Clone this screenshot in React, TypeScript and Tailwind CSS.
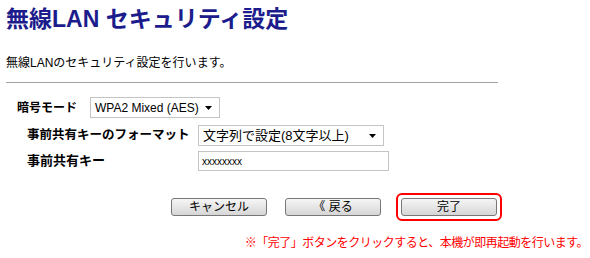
import type { ReactNode } from 'react';

// Wireless LAN security settings page (static mock of a router config screen).

const font = { fontFamily: '"Liberation Sans", "Noto Sans CJK JP", sans-serif' };

const Arrow = () => (
  <svg width="7" height="4" viewBox="0 0 7 4" className="shrink-0">
    <path d="M0 0h7L3.5 4z" fill="#000" />
  </svg>
);

const FakeSelect = ({ value, width, size }: { value: string; width: string; size: string }) => (
  <div className={`flex h-full items-center justify-between border border-[#c4c4c4] bg-white pl-[4px] pr-[7px] text-black ${size} ${width}`}>
    <span className="whitespace-nowrap">{value}</span>
    <Arrow />
  </div>
);

const Btn = ({ children }: { children: ReactNode }) => (
  <button className="flex h-[18px] w-[96px] items-center justify-center rounded-[3px] border border-[#777] bg-gradient-to-b from-[#f6f6f6] to-[#d6d6d6] text-[12px] leading-none text-black">
    {children}
  </button>
);

export default function App() {
  return (
    <div className="h-[258px] w-[590px] bg-white pl-[6px]" style={font}>
      <div className="flex h-[38px] items-center">
        <h1 className="text-[23px] font-bold leading-none text-[#1c1c8c]">無線LAN セキュリティ設定</h1>
      </div>
      <p className="mt-[13px] h-[24px] text-[12px] leading-[24px] text-black">無線LANのセキュリティ設定を行います。</p>
      <div className="mt-[7px] h-px w-[492px] bg-[#a0a0a0]" />

      <div className="mt-[14px] flex h-[21px] items-center pl-[11px]">
        <span className="w-[73px] text-[12px] font-bold text-black">暗号モード</span>
        <FakeSelect value="WPA2 Mixed (AES)" width="w-[130px]" size="text-[12px]" />
      </div>

      <div className="mt-[7px] flex h-[21px] items-center pl-[21px]">
        <span className="w-[171px] whitespace-nowrap text-[12.5px] font-bold text-black">事前共有キーのフォーマット</span>
        <FakeSelect value="文字列で設定(8文字以上)" width="w-[186px]" size="text-[13px]" />
      </div>

      <div className="mt-[5px] flex h-[20px] items-center pl-[21px]">
        <span className="w-[171px] text-[13px] font-bold text-black">事前共有キー</span>
        <input
          readOnly
          value="xxxxxxxx"
          className="h-full w-[191px] border border-[#c4c4c4] bg-white px-[3px] text-[10px] text-black outline-none"
        />
      </div>

      <div className="mt-[22px] flex h-[28px] items-center pl-[165px]">
        <Btn>キャンセル</Btn>
        <div className="ml-[18px]">
          <Btn>《 戻る</Btn>
        </div>
        <div className="ml-[15px] rounded-[6px] border-2 border-[#ff0000] p-[3px]">
          <Btn>完了</Btn>
        </div>
      </div>

      <p className="mt-[12px] h-[20px] pr-[2px] text-right text-[12px] leading-[20px] tracking-[-0.5px] text-[#ff0000]">
        ※「完了」ボタンをクリックすると、本機が即再起動を行います。
      </p>
    </div>
  );
}
